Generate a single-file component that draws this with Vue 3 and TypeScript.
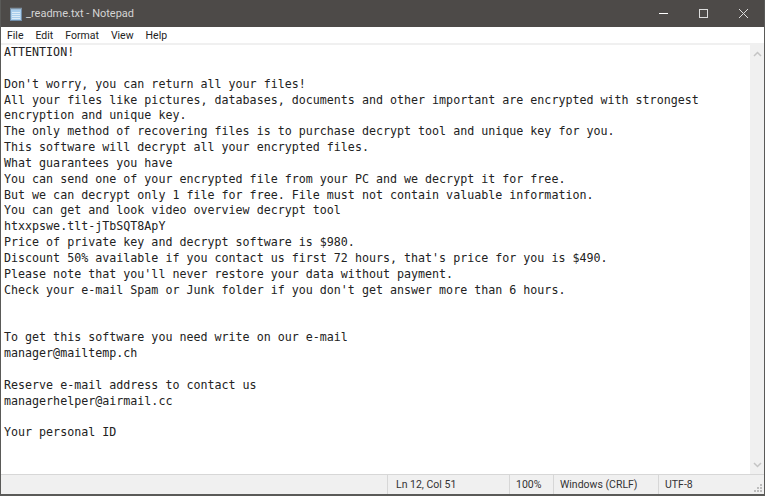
<template>
  <div class="window">
    <div class="titlebar">
      <svg class="app-icon" width="16" height="16" viewBox="0 0 16 16">
        <rect x="2.5" y="2.5" width="11" height="12" fill="#a9cdec" stroke="#6f8ba6" stroke-width="1" />
        <path d="M3 1.5v2M5 1.5v2M7 1.5v2M9 1.5v2M11 1.5v2M13 1.5v2" stroke="#8a949c" stroke-width="1" />
        <path d="M4 6.5h8M4 8.5h8M4 10.5h8M4 12.5h8" stroke="#dcebf7" stroke-width="1" />
      </svg>
      <span class="title">_readme.txt - Notepad</span>
      <div class="controls">
        <svg width="40" height="27" viewBox="0 0 40 27">
          <path d="M15 13.5h9" stroke="#fff" stroke-width="1" />
        </svg>
        <svg width="40" height="27" viewBox="0 0 40 27">
          <rect x="15.5" y="9.5" width="8" height="8" fill="none" stroke="#ddd" stroke-width="1" />
        </svg>
        <svg width="40" height="27" viewBox="0 0 40 27">
          <path d="M15 9l9 9M24 9l-9 9" stroke="#ddd" stroke-width="1" />
        </svg>
      </div>
    </div>
    <div class="menubar">
      <span v-for="item in menus" :key="item">{{ item }}</span>
    </div>
    <div class="body">
      <pre class="text">{{ content }}</pre>
      <div class="scrollbar">
        <svg width="9" height="6" viewBox="0 0 9 6"><path d="M1 5l3.5-3.5L8 5" fill="none" stroke="#c4c4c4" stroke-width="1.5" /></svg>
        <svg width="9" height="6" viewBox="0 0 9 6"><path d="M1 1l3.5 3.5L8 1" fill="none" stroke="#c4c4c4" stroke-width="1.5" /></svg>
      </div>
    </div>
    <div class="statusbar">
      <span class="cell pos">Ln 12, Col 51</span>
      <span class="cell zoom">100%</span>
      <span class="cell eol">Windows (CRLF)</span>
      <span class="cell enc">UTF-8</span>
      <svg class="grip" width="10" height="10" viewBox="0 0 10 10">
        <path d="M7 1h2v2H7zM4 4h2v2H4zM7 4h2v2H7zM1 7h2v2H1zM4 7h2v2H4zM7 7h2v2H7z" fill="#bdbdbd" />
      </svg>
    </div>
  </div>
</template>

<script setup lang="ts">
const menus = ['File', 'Edit', 'Format', 'View', 'Help']

const content = `ATTENTION!

Don't worry, you can return all your files!
All your files like pictures, databases, documents and other important are encrypted with strongest
encryption and unique key.
The only method of recovering files is to purchase decrypt tool and unique key for you.
This software will decrypt all your encrypted files.
What guarantees you have
You can send one of your encrypted file from your PC and we decrypt it for free.
But we can decrypt only 1 file for free. File must not contain valuable information.
You can get and look video overview decrypt tool
htxxpswe.tlt-jTbSQT8ApY
Price of private key and decrypt software is $980.
Discount 50% available if you contact us first 72 hours, that's price for you is $490.
Please note that you'll never restore your data without payment.
Check your e-mail Spam or Junk folder if you don't get answer more than 6 hours.


To get this software you need write on our e-mail
manager@mailtemp.ch

Reserve e-mail address to contact us
managerhelper@airmail.cc

Your personal ID`
</script>

<style>
html,
body {
  margin: 0;
  background: #fff;
}
</style>

<style scoped>
.window {
  width: 765px;
  height: 496px;
  box-sizing: border-box;
  display: flex;
  flex-direction: column;
  border: 1px solid #5a5a58;
  border-top: none;
  border-bottom-width: 2px;
  font-family: Roboto, 'Noto Sans', sans-serif;
  overflow: hidden;
}

.titlebar {
  height: 27px;
  flex: none;
  display: flex;
  align-items: center;
  background: #4d4a48;
  color: #d4d4d4;
  font-size: 11px;
  padding-left: 7px;
}

.app-icon {
  margin-right: 2px;
}

.controls {
  margin-left: auto;
  display: flex;
}

.menubar {
  height: 16px;
  flex: none;
  display: flex;
  align-items: center;
  gap: 12px;
  padding-left: 6px;
  background: #fff;
  border-bottom: 2px solid #f0f0f0;
  font-size: 10.5px;
  color: #222;
}

.body {
  flex: 1;
  min-height: 0;
  display: flex;
}

.text {
  flex: 1;
  margin: 0;
  padding: 0 0 0 3px;
  font-family: 'DejaVu Sans Mono', monospace;
  font-size: 11.67px;
  line-height: 15.85px;
  color: #222;
  overflow: hidden;
}

.scrollbar {
  width: 14px;
  flex: none;
  background: #f0f0f0;
  display: flex;
  flex-direction: column;
  justify-content: space-between;
  align-items: center;
  padding: 6px 0;
  box-sizing: border-box;
}

.statusbar {
  height: 19px;
  flex: none;
  display: flex;
  background: #f0f0f0;
  border-top: 1px solid #d7d7d7;
  font-size: 10.5px;
  color: #333;
  padding-left: 386px;
  position: relative;
}

.cell {
  display: flex;
  align-items: center;
  box-sizing: border-box;
  border-left: 1px solid #d7d7d7;
  padding-left: 6px;
}

.pos {
  width: 122px;
  padding-left: 8px;
}

.zoom {
  width: 44px;
}

.eol {
  width: 105px;
}

.enc {
  flex: 1;
}

.grip {
  position: absolute;
  right: 1px;
  bottom: 1px;
}
</style>
